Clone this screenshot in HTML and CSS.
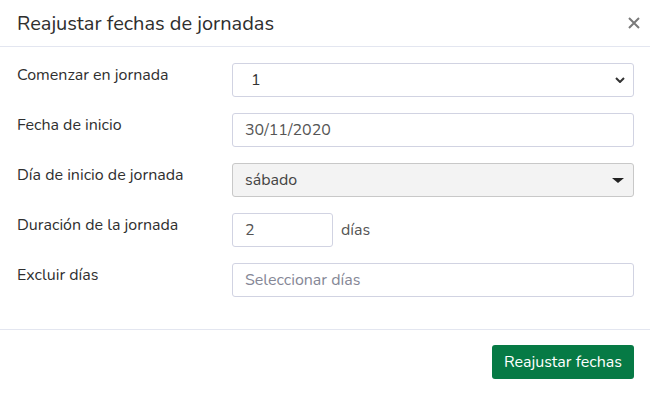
FILE: index.html
```html
<!DOCTYPE html>
<html lang="es">
<head>
    <meta charset="UTF-8">
    <meta name="viewport" content="width=device-width, initial-scale=1.0">
    <title>Reajustar fechas de jornadas</title>
    <link rel="stylesheet" href="styles.css">
</head>
<body>
    <div class="modal">
        <div class="modal-header">
            <h5 class="modal-title">Reajustar fechas de jornadas</h5>
            <button type="button" class="close">
                <svg width="12" height="12" viewBox="0 0 12 12"><path d="M1 1l10 10M11 1L1 11" stroke="#7a7a7a" stroke-width="2"/></svg>
            </button>
        </div>
        <div class="modal-body">
            <div class="form-row">
                <label>Comenzar en jornada</label>
                <div class="field select-native">
                    <span>1</span>
                    <svg width="10" height="6" viewBox="0 0 10 6"><path d="M1 1l4 4 4-4" fill="none" stroke="#333" stroke-width="2"/></svg>
                </div>
            </div>
            <div class="form-row">
                <label>Fecha de inicio</label>
                <div class="field">30/11/2020</div>
            </div>
            <div class="form-row">
                <label>Día de inicio de jornada</label>
                <div class="field select-box">
                    <span>sábado</span>
                    <span class="caret"></span>
                </div>
            </div>
            <div class="form-row">
                <label>Duración de la jornada</label>
                <div class="inline">
                    <div class="field small">2</div>
                    <span class="unit">días</span>
                </div>
            </div>
            <div class="form-row">
                <label>Excluir días</label>
                <div class="field placeholder">Seleccionar días</div>
            </div>
        </div>
        <div class="modal-footer">
            <button type="button" class="btn-success">Reajustar fechas</button>
        </div>
    </div>
</body>
</html>
```

FILE: styles.css
```css
body {
    margin: 0;
    font-family: "Nunito", Lato, "Open Sans", sans-serif;
    background: #fff;
    color: #333;
}
.modal {
    width: 650px;
    height: 394px;
    background: #fff;
    box-sizing: border-box;
    display: flex;
    flex-direction: column;
}
.modal-header {
    display: flex;
    justify-content: space-between;
    align-items: center;
    flex: 0 0 47px;
    box-sizing: border-box;
    padding: 0 10px 0 17px;
    border-bottom: 1px solid #e3e6f0;
}
.modal-title {
    margin: 0;
    font-size: 20px;
    font-weight: 400;
    color: #2e2e2e;
}
.close {
    background: none;
    border: none;
    padding: 0;
    display: flex;
    cursor: pointer;
}
.modal-body {
    padding: 16px 16px 16px 17px;
    flex: 1;
    display: flex;
    flex-direction: column;
    gap: 16px;
}
.form-row {
    display: grid;
    grid-template-columns: 215px 1fr;
    align-items: start;
}
label {
    font-size: 16px;
    color: #2f2f2f;
    padding-top: 1px;
}
.field {
    height: 34px;
    box-sizing: border-box;
    border: 1px solid #d1d3e2;
    border-radius: 3px;
    padding: 0 12px;
    font-size: 16px;
    color: #555;
    display: flex;
    align-items: center;
}
.select-native {
    justify-content: space-between;
    padding-left: 18px;
    padding-right: 8px;
    color: #333;
}
.select-box {
    justify-content: space-between;
    background: #f3f3f3;
    border-color: #c8c8c8;
    color: #444;
    padding-right: 9px;
}
.caret {
    width: 0;
    height: 0;
    border-left: 6px solid transparent;
    border-right: 6px solid transparent;
    border-top: 5px solid #222;
}
.inline {
    display: flex;
    align-items: center;
    gap: 8px;
}
.small {
    width: 101px;
}
.unit {
    font-size: 16px;
    color: #555;
}
.placeholder {
    color: #858796;
}
.modal-footer {
    display: flex;
    justify-content: flex-end;
    align-items: center;
    flex: 0 0 65px;
    box-sizing: border-box;
    padding: 0 16px 0 16px;
    border-top: 1px solid #e3e6f0;
}
.btn-success {
    background: #067a45;
    color: #fff;
    border: none;
    border-radius: 3px;
    font-family: inherit;
    font-size: 16px;
    padding: 0 12px;
    height: 34px;
    cursor: pointer;
}
```
